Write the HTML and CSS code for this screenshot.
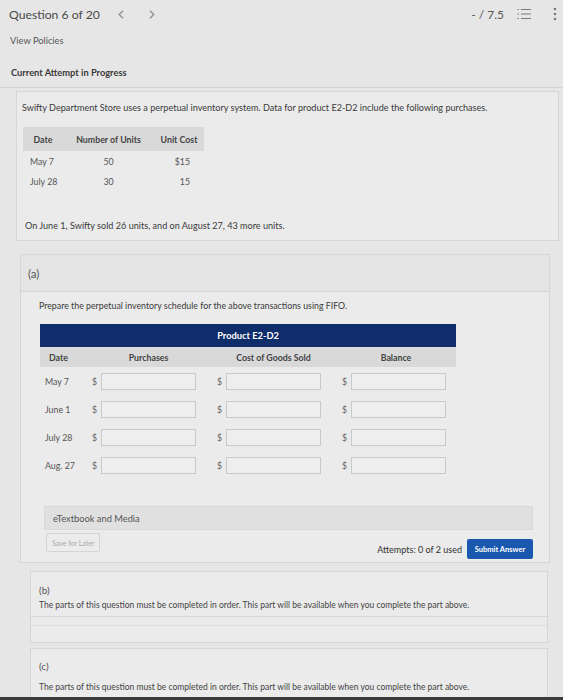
FILE: index.html
```html
<!DOCTYPE html>
<html lang="en">
<head>
    <meta charset="UTF-8">
    <meta name="viewport" content="width=device-width, initial-scale=1.0">
    <title>Question 6 of 20</title>
    <link rel="stylesheet" href="styles.css">
</head>
<body>

    <header class="topbar">
        <div class="q-nav">
            <span class="q-title">Question 6 of 20</span>
            <span class="nav-arrow">
                <svg width="6" height="9" viewBox="0 0 6 9"><path d="M5 0.8 L1.2 4.5 L5 8.2" fill="none" stroke="#8a8a8a" stroke-width="1.2"/></svg>
            </span>
            <span class="nav-arrow">
                <svg width="6" height="9" viewBox="0 0 6 9"><path d="M1 0.8 L4.8 4.5 L1 8.2" fill="none" stroke="#8a8a8a" stroke-width="1.2"/></svg>
            </span>
        </div>
        <div class="q-tools">
            <span class="score">- / 7.5</span>
            <svg class="list-icon" width="14" height="12" viewBox="0 0 14 12">
                <g stroke="#7a7a7a" stroke-width="1.1">
                    <path d="M4 1.5 H14 M4 6 H14 M4 10.5 H14"/>
                    <path d="M0.5 1.5 H2 M0.5 6 H2 M0.5 10.5 H2"/>
                </g>
            </svg>
            <svg class="kebab" width="4" height="14" viewBox="0 0 4 14">
                <circle cx="2" cy="2" r="1.3" fill="#7a7a7a"/>
                <circle cx="2" cy="7" r="1.3" fill="#7a7a7a"/>
                <circle cx="2" cy="12" r="1.3" fill="#7a7a7a"/>
            </svg>
        </div>
    </header>

    <div class="policies">View Policies</div>
    <div class="attempt-label">Current Attempt in Progress</div>
    <div class="divider"></div>

    <section class="question-box">
        <p class="q-text">Swifty Department Store uses a perpetual inventory system. Data for product E2-D2 include the following purchases.</p>

        <table class="data-table">
            <thead>
                <tr>
                    <th class="col-date">Date</th>
                    <th class="col-units">Number of Units</th>
                    <th class="col-cost">Unit Cost</th>
                </tr>
            </thead>
            <tbody>
                <tr>
                    <td class="col-date">May 7</td>
                    <td class="col-units">50</td>
                    <td class="col-cost">$15</td>
                </tr>
                <tr>
                    <td class="col-date">July 28</td>
                    <td class="col-units">30</td>
                    <td class="col-cost">15</td>
                </tr>
            </tbody>
        </table>

        <p class="q-text q-after">On June 1, Swifty sold 26 units, and on August 27, 43 more units.</p>
    </section>

    <section class="part part-a">
        <div class="part-head">(a)</div>
        <div class="part-body">
            <p class="prompt">Prepare the perpetual inventory schedule for the above transactions using FIFO.</p>

            <div class="schedule">
                <div class="schedule-title">Product E2-D2</div>
                <div class="schedule-row schedule-head">
                    <span class="s-date">Date</span>
                    <span class="s-col">Purchases</span>
                    <span class="s-col">Cost of Goods Sold</span>
                    <span class="s-col s-bal">Balance</span>
                </div>
                <div class="schedule-row">
                    <span class="s-date">May 7</span>
                    <span class="s-col"><i>$</i><input class="s-input" type="text"></span>
                    <span class="s-col"><i>$</i><input class="s-input" type="text"></span>
                    <span class="s-col s-bal"><i>$</i><input class="s-input" type="text"></span>
                </div>
                <div class="schedule-row">
                    <span class="s-date">June 1</span>
                    <span class="s-col"><i>$</i><input class="s-input" type="text"></span>
                    <span class="s-col"><i>$</i><input class="s-input" type="text"></span>
                    <span class="s-col s-bal"><i>$</i><input class="s-input" type="text"></span>
                </div>
                <div class="schedule-row">
                    <span class="s-date">July 28</span>
                    <span class="s-col"><i>$</i><input class="s-input" type="text"></span>
                    <span class="s-col"><i>$</i><input class="s-input" type="text"></span>
                    <span class="s-col s-bal"><i>$</i><input class="s-input" type="text"></span>
                </div>
                <div class="schedule-row">
                    <span class="s-date">Aug. 27</span>
                    <span class="s-col"><i>$</i><input class="s-input" type="text"></span>
                    <span class="s-col"><i>$</i><input class="s-input" type="text"></span>
                    <span class="s-col s-bal"><i>$</i><input class="s-input" type="text"></span>
                </div>
            </div>

            <div class="media-bar">eTextbook and Media</div>

            <div class="actions">
                <button class="save-btn">Save for Later</button>
                <div class="submit-group">
                    <span class="attempts">Attempts: 0 of 2 used</span>
                    <button class="submit-btn">Submit Answer</button>
                </div>
            </div>
        </div>
    </section>

    <section class="part part-locked">
        <div class="locked-head">
            <div class="part-label">(b)</div>
            <p class="locked-text">The parts of this question must be completed in order. This part will be available when you complete the part above.</p>
        </div>
        <div class="locked-foot"></div>
    </section>

    <section class="part part-locked part-last">
        <div class="locked-head">
            <div class="part-label">(c)</div>
            <p class="locked-text">The parts of this question must be completed in order. This part will be available when you complete the part above.</p>
        </div>
    </section>

    <div class="bezel"></div>

</body>
</html>
```

FILE: styles.css
```css
body {
    font-family: Lato, "Open Sans", Arial, sans-serif;
    background-color: #e6e6e6;
    color: #3a3a3a;
    margin: 0;
    height: 700px;
    overflow: hidden;
    display: flex;
    flex-direction: column;
}
body > * {
    flex-shrink: 0;
}
.topbar {
    height: 28px;
    padding: 0 6px 0 9px;
    display: flex;
    align-items: center;
    justify-content: space-between;
}
.q-nav {
    display: flex;
    align-items: center;
}
.q-title {
    font-size: 12.2px;
    color: #4a4a4a;
    margin-right: 18px;
}
.nav-arrow {
    display: flex;
    margin-right: 25px;
}
.q-tools {
    display: flex;
    align-items: center;
}
.score {
    font-size: 12px;
    color: #555;
    margin-right: 13px;
}
.list-icon {
    margin-right: 22px;
}
.policies {
    font-size: 9.3px;
    color: #555;
    line-height: 12px;
    margin: 7px 0 0 10px;
}
.attempt-label {
    font-size: 9.3px;
    font-weight: bold;
    color: #3a3a3a;
    line-height: 12px;
    margin: 20px 0 0 11px;
}
.divider {
    height: 1px;
    background-color: #d4d4d4;
    margin-top: 8px;
}
.question-box {
    margin: 3px 4px 0 16px;
    border: 1px solid #d6d6d6;
    background-color: #ebebeb;
    padding: 10px 6px 8px 5px;
}
.q-text {
    font-size: 9.1px;
    line-height: 12px;
    margin: 0;
    color: #3a3a3a;
}
.q-after {
    margin-top: 29px;
    padding-left: 3px;
}
.data-table {
    border-collapse: collapse;
    margin-top: 13px;
    margin-left: 1px;
    font-size: 8.8px;
}
.data-table th {
    background-color: #d9d9d9;
    height: 24px;
    font-weight: bold;
    color: #444;
    padding: 0;
}
.data-table td {
    height: 20px;
    color: #555;
    padding: 0;
}
.data-table .col-date {
    width: 40px;
}
.data-table td.col-date {
    width: 33px;
    padding-left: 7px;
}
.data-table .col-units {
    width: 91px;
    text-align: center;
}
.data-table .col-cost {
    width: 50px;
}
.data-table td.col-cost {
    width: 36px;
    text-align: right;
    padding-right: 14px;
}
.part {
    margin: 13px 13px 0 20px;
    border: 1px solid #d6d6d6;
    background-color: #ebebeb;
}
.part-head {
    height: 36px;
    display: flex;
    align-items: center;
    padding-left: 7px;
    font-size: 11.5px;
    color: #555;
    background-color: #e4e4e4;
    border-bottom: 1px solid #d6d6d6;
}
.part-body {
    padding: 8px 16px 3px 18px;
}
.prompt {
    font-size: 8.8px;
    line-height: 12px;
    margin: 0;
    color: #3a3a3a;
}
.schedule {
    margin-top: 12px;
    width: 416px;
    margin-left: 1px;
}
.schedule-title {
    background-color: #0f2c6b;
    color: #fff;
    font-size: 9.3px;
    font-weight: bold;
    height: 23px;
    display: flex;
    align-items: center;
    justify-content: center;
}
.schedule-row {
    display: flex;
    align-items: center;
    height: 28px;
    font-size: 8.8px;
    color: #555;
}
.schedule-head {
    height: 20px;
    background-color: #d9d9d9;
    color: #444;
    font-weight: bold;
}
.s-date {
    width: 46px;
    padding-left: 5px;
    box-sizing: border-box;
}
.schedule-head .s-date {
    padding-left: 9px;
}
.s-col {
    width: 125px;
    display: flex;
    align-items: center;
    padding-left: 6px;
    box-sizing: border-box;
}
.schedule-head .s-col {
    justify-content: center;
    padding-left: 0;
}
.s-bal {
    width: 120px;
}
.s-col i {
    font-style: normal;
    width: 9px;
    color: #666;
}
.s-input {
    width: 95px;
    height: 17px;
    box-sizing: border-box;
    border: 1px solid #c9c9c9;
    background-color: #eeeeee;
    margin: 0;
    padding: 0;
}
.media-bar {
    margin: 27px 0 0 5px;
    height: 22px;
    background-color: #e0e0e0;
    border: 1px solid #d8d8d8;
    font-size: 9.3px;
    color: #555;
    display: flex;
    align-items: center;
    padding-left: 8px;
}
.actions {
    display: flex;
    justify-content: space-between;
    align-items: flex-end;
    margin: 3px 0 0 7px;
}
.save-btn {
    font-family: inherit;
    font-size: 7px;
    color: #aaa;
    background-color: #ececec;
    border: 1px solid #d4d4d4;
    border-radius: 2px;
    height: 19px;
    padding: 0 5px;
    align-self: flex-start;
}
.submit-group {
    display: flex;
    align-items: center;
    margin-top: 6px;
}
.attempts {
    font-size: 9px;
    color: #333;
    margin-right: 5px;
}
.submit-btn {
    font-family: inherit;
    font-size: 7.5px;
    font-weight: bold;
    color: #fff;
    background-color: #1a58b0;
    border: none;
    border-radius: 2px;
    height: 20px;
    width: 66px;
}
.part-locked {
    margin-left: 30px;
    margin-right: 15px;
    margin-top: 8px;
}
.locked-head {
    padding: 11px 8px 5px;
    border-bottom: 1px solid #d6d6d6;
}
.part-label {
    font-size: 10px;
    color: #555;
    line-height: 14px;
}
.locked-text {
    font-size: 8.5px;
    line-height: 12px;
    margin: 2px 0 0;
    color: #444;
}
.locked-foot {
    height: 16px;
    border-top: 1px solid #dcdcdc;
    margin-top: 8px;
}
.part-last {
    flex: 1 1 0;
    min-height: 0;
    overflow: hidden;
    margin-top: 5px;
    border-bottom: none;
}
.part-last .locked-head {
    padding-top: 10px;
    border-bottom: none;
}
.part-last .locked-text {
    margin-top: 8px;
}
.bezel {
    height: 3px;
    background-color: #3a3a3a;
}
```
